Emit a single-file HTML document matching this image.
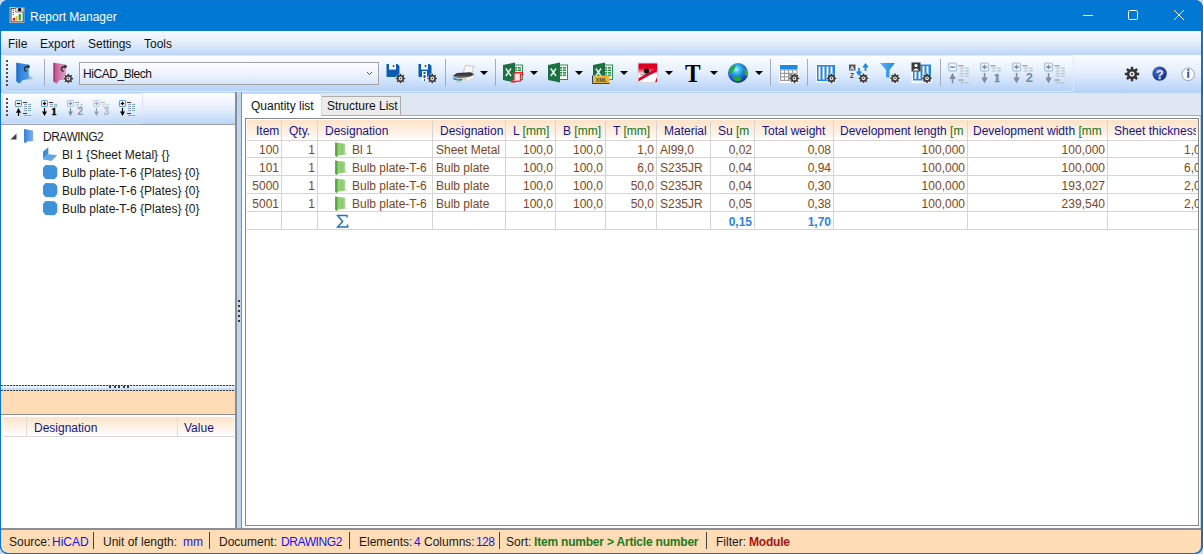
<!DOCTYPE html>
<html><head><meta charset="utf-8">
<style>
*{box-sizing:border-box;margin:0;padding:0}
html,body{width:1203px;height:554px;overflow:hidden;background:#c8d8e8;font-family:"Liberation Sans",sans-serif;font-size:12px;line-height:14px}
.a{position:absolute}
#win{position:absolute;left:0;top:0;width:1203px;height:554px;background:#0078d4;border-radius:8px;overflow:hidden}
#title{left:0;top:0;width:1203px;height:31px;color:#fff}
#menu{left:1px;top:31px;width:1200px;height:24px;background:linear-gradient(#f7faff,#e4eefb 50%,#bcd6f8)}
#menu span{position:absolute;top:6px;color:#111}
#tb{left:1px;top:55px;width:1200px;height:37px;background:linear-gradient(#fafcff,#e2edfc 50%,#b4d2f8)}
#tbseg{left:2px;top:0;width:1071px;height:37px;border:1px solid #e6e6f8;border-radius:4px;background:linear-gradient(#fdfeff,#e5effd 45%,#b6d3f8)}
#main{left:1px;top:92px;width:1200px;height:436px;background:#dfe7f2}
#status{left:1px;top:528px;width:1200px;height:25px;background:#fddcb6;border-top:2px solid #8a8e96;border-radius:0 0 7px 7px}
#status span{position:absolute;top:5px;color:#1a1a1a;white-space:nowrap}
.sep{position:absolute;width:1px;background:#9fa9b6}
.ssep{position:absolute;top:2px;width:1px;height:17px;background:#444}
.dd{position:absolute;top:16px;width:0;height:0;border-left:4px solid transparent;border-right:4px solid transparent;border-top:4px solid #000}
.ic{position:absolute}
.tree span{position:absolute;color:#1a1a1a;white-space:nowrap}
.hdr{position:absolute;top:0;height:20px;background:linear-gradient(#fde3c9,#fff);border-bottom:1px solid #d8d8d8}
.cell{position:absolute;height:18px;white-space:nowrap;overflow:hidden;color:#7c4622}
.h{position:absolute;white-space:nowrap;overflow:hidden;color:#14148c;top:3px}
.g{color:#15721a}
.vl{position:absolute;width:1px;background:#dcdcdc}
.hl{position:absolute;height:1px;background:#dcdcdc}
</style></head><body>
<div id="win">
 <div id="title" class="a">
  <div class="a" style="left:30px;top:10px">Report Manager</div>
 </div>
 <div id="menu" class="a">
  <span style="left:7px">File</span>
  <span style="left:39px">Export</span>
  <span style="left:87px">Settings</span>
  <span style="left:143px">Tools</span>
 </div>
 <div id="tb" class="a">
  <div id="tbseg" class="a"></div>
 </div>
 <div id="main" class="a">
  <!-- left panel -->
  <div class="a" style="left:0;top:0;width:1200px;height:1px;background:#b6d1f7"></div>
  <div class="a" style="left:0;top:1px;width:235px;height:31px;background:linear-gradient(#fdfeff,#e6effc 50%,#bcd6f8)"></div>
  <div class="a" style="left:1px;top:1px;width:141px;height:31px;border:1px solid #dfe0f2;border-radius:4px;background:linear-gradient(#fdfeff,#e8f0fc 50%,#bed8f8)"></div>
  <div class="a tree" style="left:0;top:32px;width:236px;height:262px;background:#fff;border-top:1px solid #a0a0a0;border-right:1px solid #8c8c8c">
   <span style="left:42px;top:5px;letter-spacing:-0.5px">DRAWING2</span>
   <span style="left:61px;top:23px">Bl 1 {Sheet Metal} {}</span>
   <span style="left:61px;top:41px">Bulb plate-T-6 {Plates} {0}</span>
   <span style="left:61px;top:59px">Bulb plate-T-6 {Plates} {0}</span>
   <span style="left:61px;top:77px">Bulb plate-T-6 {Plates} {0}</span>
  </div>
  <!-- h splitter -->
  <div class="a" style="left:0;top:293px;width:236px;height:1px;background:repeating-linear-gradient(90deg,#444 0 2px,#c8c8c8 2px 3px)"></div>
  <div class="a" style="left:0;top:294px;width:236px;height:4px;background:linear-gradient(#f2f8ff,#b8d6f8)"></div>
  <div class="a" style="left:0;top:298px;width:236px;height:1px;background:repeating-linear-gradient(90deg,#444 0 2px,#c8c8c8 2px 3px)"></div>
  <div class="a" style="left:108px;top:294px;width:22px;height:2px;background:repeating-linear-gradient(90deg,#3a3a3a 0 2px,transparent 2px 4.5px)"></div>
  <div class="a" style="left:0;top:299px;width:236px;height:24px;background:#fddcb6;border-bottom:1px solid #8c8c8c"></div>
  <div class="a" style="left:0;top:323px;width:236px;height:113px;background:#fff;border-right:1px solid #8c8c8c">
   <div class="hdr" style="left:2px;top:2px;width:231px;height:20px"></div>
   <div class="vl" style="left:25px;top:3px;height:19px"></div>
   <div class="vl" style="left:176px;top:3px;height:19px"></div>
   <div class="h" style="left:33px;top:6px">Designation</div>
   <div class="h" style="left:183px;top:6px">Value</div>
  </div>
  <!-- v splitter -->
  <div class="a" style="left:234px;top:0;width:2px;height:436px;background:#8c8c8c"></div>
  <div class="a" style="left:236px;top:0;width:5px;height:436px;background:#bcd6f8;border-right:1px solid #8c8c8c"></div>
  <!-- right: tabs -->
  <div class="a" style="left:241px;top:23px;width:959px;height:413px;background:#fff;border-top:1px solid #a9a9a9;border-right:1px solid #cfcfcf"></div>
  <div class="a" style="left:241px;top:1px;width:80px;height:24px;background:#fff;border-top:1px solid #d9d9d9;border-right:1px solid #d9d9d9"></div>
  <div class="a" style="left:250px;top:7px;color:#111">Quantity list</div>
  <div class="a" style="left:321px;top:4px;width:79px;height:20px;background:#ececec;border:1px solid #acacac;border-left:none"></div>
  <div class="a" style="left:326px;top:7px;color:#111">Structure List</div>
  <!-- grid frame -->
  <div class="a" id="grid" style="left:244px;top:26px;width:954px;height:408px;background:#fff;border:1px solid #828790;overflow:hidden">
  </div>
 </div>
 <div class="a" style="left:247px;top:120px;width:951px;height:20px;background:linear-gradient(#fde2c6,#fef6ee 80%,#fff)"></div>
<div class="a" style="left:247px;top:140px;width:951px;height:1px;background:#d5d5d5"></div>
<div class="a" style="left:247px;top:157px;width:951px;height:1px;background:#d5d5d5"></div>
<div class="a" style="left:247px;top:175px;width:951px;height:1px;background:#d5d5d5"></div>
<div class="a" style="left:247px;top:193px;width:951px;height:1px;background:#d5d5d5"></div>
<div class="a" style="left:247px;top:211px;width:951px;height:1px;background:#d5d5d5"></div>
<div class="a" style="left:247px;top:229px;width:951px;height:1px;background:#d5d5d5"></div>
<div class="a" style="left:281px;top:121px;width:1px;height:109px;background:#d5d5d5"></div>
<div class="a" style="left:317px;top:121px;width:1px;height:109px;background:#d5d5d5"></div>
<div class="a" style="left:432px;top:121px;width:1px;height:109px;background:#d5d5d5"></div>
<div class="a" style="left:505px;top:121px;width:1px;height:109px;background:#d5d5d5"></div>
<div class="a" style="left:555px;top:121px;width:1px;height:109px;background:#d5d5d5"></div>
<div class="a" style="left:605px;top:121px;width:1px;height:109px;background:#d5d5d5"></div>
<div class="a" style="left:656px;top:121px;width:1px;height:109px;background:#d5d5d5"></div>
<div class="a" style="left:710px;top:121px;width:1px;height:109px;background:#d5d5d5"></div>
<div class="a" style="left:754px;top:121px;width:1px;height:109px;background:#d5d5d5"></div>
<div class="a" style="left:833px;top:121px;width:1px;height:109px;background:#d5d5d5"></div>
<div class="a" style="left:967px;top:121px;width:1px;height:109px;background:#d5d5d5"></div>
<div class="a" style="left:1107px;top:121px;width:1px;height:109px;background:#d5d5d5"></div>
<div class="h" style="left:256px;top:124px;width:23px">Item</div>
<div class="h" style="left:289px;top:124px;width:26px">Qty.</div>
<div class="h" style="left:325px;top:124px;width:105px">Designation</div>
<div class="h" style="left:440px;top:124px;width:63px">Designation</div>
<div class="h" style="left:513px;top:124px;width:40px">L <span class=g>[mm]</span></div>
<div class="h" style="left:563px;top:124px;width:40px">B <span class=g>[mm]</span></div>
<div class="h" style="left:613px;top:124px;width:41px">T <span class=g>[mm]</span></div>
<div class="h" style="left:664px;top:124px;width:44px">Material</div>
<div class="h" style="left:718px;top:124px;width:34px">Su <span class=g>[m</span></div>
<div class="h" style="left:762px;top:124px;width:69px">Total weight</div>
<div class="h" style="left:840px;top:124px;width:125px">Development length <span class=g>[m</span></div>
<div class="h" style="left:973px;top:124px;width:132px">Development width <span class=g>[mm</span></div>
<div class="h" style="left:1114px;top:124px;width:82px">Sheet thickness</div>
<div class="cell" style="left:248px;top:143px;width:31px;text-align:right">100</div>
<div class="cell" style="left:282px;top:143px;width:33px;text-align:right">1</div>
<div class="cell" style="left:352px;top:143px;width:79px">Bl 1</div>
<div class="cell" style="left:436px;top:143px;width:68px">Sheet Metal</div>
<div class="cell" style="left:506px;top:143px;width:47px;text-align:right">100,0</div>
<div class="cell" style="left:556px;top:143px;width:47px;text-align:right">100,0</div>
<div class="cell" style="left:606px;top:143px;width:48px;text-align:right">1,0</div>
<div class="cell" style="left:660px;top:143px;width:49px">Al99,0</div>
<div class="cell" style="left:711px;top:143px;width:41px;text-align:right">0,02</div>
<div class="cell" style="left:755px;top:143px;width:76px;text-align:right">0,08</div>
<div class="cell" style="left:834px;top:143px;width:131px;text-align:right">100,000</div>
<div class="cell" style="left:968px;top:143px;width:137px;text-align:right">100,000</div>
<div class="a" style="left:1108px;top:143px;width:90px;height:18px;overflow:hidden"><div class="cell" style="left:0;top:0;width:106px;text-align:right">1,000</div></div>
<div class="cell" style="left:248px;top:161px;width:31px;text-align:right">101</div>
<div class="cell" style="left:282px;top:161px;width:33px;text-align:right">1</div>
<div class="cell" style="left:352px;top:161px;width:79px">Bulb plate-T-6</div>
<div class="cell" style="left:436px;top:161px;width:68px">Bulb plate</div>
<div class="cell" style="left:506px;top:161px;width:47px;text-align:right">100,0</div>
<div class="cell" style="left:556px;top:161px;width:47px;text-align:right">100,0</div>
<div class="cell" style="left:606px;top:161px;width:48px;text-align:right">6,0</div>
<div class="cell" style="left:660px;top:161px;width:49px">S235JR</div>
<div class="cell" style="left:711px;top:161px;width:41px;text-align:right">0,04</div>
<div class="cell" style="left:755px;top:161px;width:76px;text-align:right">0,94</div>
<div class="cell" style="left:834px;top:161px;width:131px;text-align:right">100,000</div>
<div class="cell" style="left:968px;top:161px;width:137px;text-align:right">100,000</div>
<div class="a" style="left:1108px;top:161px;width:90px;height:18px;overflow:hidden"><div class="cell" style="left:0;top:0;width:106px;text-align:right">6,000</div></div>
<div class="cell" style="left:248px;top:179px;width:31px;text-align:right">5000</div>
<div class="cell" style="left:282px;top:179px;width:33px;text-align:right">1</div>
<div class="cell" style="left:352px;top:179px;width:79px">Bulb plate-T-6</div>
<div class="cell" style="left:436px;top:179px;width:68px">Bulb plate</div>
<div class="cell" style="left:506px;top:179px;width:47px;text-align:right">100,0</div>
<div class="cell" style="left:556px;top:179px;width:47px;text-align:right">100,0</div>
<div class="cell" style="left:606px;top:179px;width:48px;text-align:right">50,0</div>
<div class="cell" style="left:660px;top:179px;width:49px">S235JR</div>
<div class="cell" style="left:711px;top:179px;width:41px;text-align:right">0,04</div>
<div class="cell" style="left:755px;top:179px;width:76px;text-align:right">0,30</div>
<div class="cell" style="left:834px;top:179px;width:131px;text-align:right">100,000</div>
<div class="cell" style="left:968px;top:179px;width:137px;text-align:right">193,027</div>
<div class="a" style="left:1108px;top:179px;width:90px;height:18px;overflow:hidden"><div class="cell" style="left:0;top:0;width:106px;text-align:right">2,000</div></div>
<div class="cell" style="left:248px;top:197px;width:31px;text-align:right">5001</div>
<div class="cell" style="left:282px;top:197px;width:33px;text-align:right">1</div>
<div class="cell" style="left:352px;top:197px;width:79px">Bulb plate-T-6</div>
<div class="cell" style="left:436px;top:197px;width:68px">Bulb plate</div>
<div class="cell" style="left:506px;top:197px;width:47px;text-align:right">100,0</div>
<div class="cell" style="left:556px;top:197px;width:47px;text-align:right">100,0</div>
<div class="cell" style="left:606px;top:197px;width:48px;text-align:right">50,0</div>
<div class="cell" style="left:660px;top:197px;width:49px">S235JR</div>
<div class="cell" style="left:711px;top:197px;width:41px;text-align:right">0,05</div>
<div class="cell" style="left:755px;top:197px;width:76px;text-align:right">0,38</div>
<div class="cell" style="left:834px;top:197px;width:131px;text-align:right">100,000</div>
<div class="cell" style="left:968px;top:197px;width:137px;text-align:right">239,540</div>
<div class="a" style="left:1108px;top:197px;width:90px;height:18px;overflow:hidden"><div class="cell" style="left:0;top:0;width:106px;text-align:right">2,000</div></div>
<div class="cell" style="left:711px;top:215px;width:41px;text-align:right;color:#2b83e6;font-weight:bold">0,15</div>
<div class="cell" style="left:755px;top:215px;width:76px;text-align:right;color:#2b83e6;font-weight:bold">1,70</div>
 <div class="a" style="left:79px;top:62px;width:300px;height:23px;border:1px solid #a3a3a3;background:linear-gradient(rgba(255,255,255,.55),rgba(255,255,255,.25))"></div>
<div class="a" style="left:83px;top:67px;color:#111;letter-spacing:-0.45px">HiCAD_Blech</div>
<div class="a" style="left:684.5px;top:61px;font-family:'Liberation Serif',serif;font-weight:bold;font-size:26px;line-height:26px;color:#000;transform:scaleX(.9);transform-origin:0 0">T</div>
<svg class="a" style="left:0;top:0" width="1203" height="554" viewBox="0 0 1203 554">
<rect x="9.7" y="7" width="14.6" height="16" fill="#f2f2f2"/>
<rect x="11" y="8.3" width="12.2" height="13.6" fill="#fff" stroke="#383838" stroke-width="1"/>
<rect x="15.2" y="7" width="9.2" height="5.6" fill="#8e8e8e"/>
<rect x="16" y="8" width="2" height="3.5" fill="#d8d8d8"/><rect x="21.2" y="8" width="2.3" height="3.5" fill="#d0d0d0"/>
<circle cx="19.6" cy="9.7" r="1.6" fill="#111"/>
<circle cx="13.3" cy="10.2" r=".6" fill="#333"/><circle cx="13.3" cy="12.4" r=".6" fill="#333"/><circle cx="13.3" cy="14.5" r=".6" fill="#333"/>
<rect x="12.8" y="17.8" width="2.2" height="2.8" fill="#e01020"/>
<rect x="15.7" y="16" width="1.9" height="4.6" fill="#e8c020"/>
<rect x="18.7" y="14" width="2.1" height="6.3" fill="#1ea028"/>
<rect x="1083" y="15" width="10" height="1" fill="#fff"/>
<rect x="1128.5" y="10.5" width="9" height="9" rx="1.2" fill="none" stroke="#fff" stroke-width="1"/>
<path d="M1174 10 L1184 20 M1184 10 L1174 20" stroke="#fff" stroke-width="1"/>

<rect x="6" y="60" width="2" height="2" fill="#505050"/>
<rect x="6" y="64" width="2" height="2" fill="#505050"/>
<rect x="6" y="68" width="2" height="2" fill="#505050"/>
<rect x="6" y="72" width="2" height="2" fill="#505050"/>
<rect x="6" y="76" width="2" height="2" fill="#505050"/>
<rect x="6" y="80" width="2" height="2" fill="#505050"/>
<rect x="6" y="84" width="2" height="2" fill="#505050"/>

<defs>
<linearGradient id="bf" x1="0" x2="1"><stop offset="0" stop-color="#2674d4"/><stop offset=".5" stop-color="#3a8ce0"/><stop offset="1" stop-color="#4c98e4"/></linearGradient>
<linearGradient id="pf" x1="0" x2="1"><stop offset="0" stop-color="#b84a82"/><stop offset=".5" stop-color="#cf7aaa"/><stop offset="1" stop-color="#dc9cc0"/></linearGradient>
</defs>
<path d="M16.5 62.8 L28.8 64.5 L28.8 79 L22.5 80.3 L19.8 83.6 L17.2 82.2 L16.5 81 Z" fill="url(#bf)"/>
<path d="M28.8 75.5 L33.5 78.5 L28.8 80 Z" fill="#8fa6bf" opacity=".75"/>
<path d="M16.5 62.8 L17.9 63 L17.9 82.5 L16.5 81 Z" fill="#2068c8"/>
<path d="M28 66.4 Q24.2 66.2 24.4 69.4 Q24.8 71.3 26.6 71.2" fill="none" stroke="#2a2a2a" stroke-width="1.5"/>
<circle cx="28.3" cy="66.6" r="1.6" fill="#333"/>

<rect x="44" y="59" width="1" height="27" fill="#a3acb8"/>

<path d="M53.5 62.8 L65.8 64.5 L65.8 79 L59.5 80.3 L56.8 83.6 L54.2 82.2 L53.5 81 Z" fill="url(#pf)"/>
<path d="M53.5 62.8 L54.9 63 L54.9 82.5 L53.5 81 Z" fill="#a83a70"/>
<path d="M65 66.4 Q61.2 66.2 61.4 69.4 Q61.8 71.3 63.6 71.2" fill="none" stroke="#2a2a2a" stroke-width="1.5"/>
<circle cx="65.3" cy="66.6" r="1.6" fill="#333"/>

<circle cx="68.4" cy="78.6" r="5.3" fill="#ffffff" opacity="0.35"/><path d="M71.80 77.76 L73.13 77.81 L73.13 79.39 L71.80 79.44 L71.40 80.41 L72.31 81.39 L71.19 82.51 L70.21 81.60 L69.24 82.00 L69.19 83.33 L67.61 83.33 L67.56 82.00 L66.59 81.60 L65.61 82.51 L64.49 81.39 L65.40 80.41 L65.00 79.44 L63.67 79.39 L63.67 77.81 L65.00 77.76 L65.40 76.79 L64.49 75.81 L65.61 74.69 L66.59 75.60 L67.56 75.20 L67.61 73.87 L69.19 73.87 L69.24 75.20 L70.21 75.60 L71.19 74.69 L72.31 75.81 L71.40 76.79Z" fill="#3c3c3c"/><circle cx="68.4" cy="78.6" r="1.9" fill="#e8e8e8"/><circle cx="68.4" cy="78.6" r="0.8" fill="#3c3c3c"/>
<path d="M367 72 L369.5 74.5 L372 72" fill="none" stroke="#555" stroke-width="1"/>

<path d="M386.5 64 L397.5 64 L399.5 66 L399.5 76 Q399.5 77 398.5 77 L387.5 77 Q386.5 77 386.5 76 Z" fill="#0a5cae"/>
<rect x="389" y="64" width="7" height="5.6" fill="#f4f6fa"/>
<rect x="392.8" y="65" width="1.5" height="2" fill="#0a5cae"/>

<circle cx="400.5" cy="78.5" r="5.3" fill="#ffffff" opacity="0.35"/><path d="M403.99 77.63 L405.23 77.71 L405.23 79.29 L403.99 79.37 L403.58 80.36 L404.41 81.29 L403.29 82.41 L402.36 81.58 L401.37 81.99 L401.29 83.23 L399.71 83.23 L399.63 81.99 L398.64 81.58 L397.71 82.41 L396.59 81.29 L397.42 80.36 L397.01 79.37 L395.77 79.29 L395.77 77.71 L397.01 77.63 L397.42 76.64 L396.59 75.71 L397.71 74.59 L398.64 75.42 L399.63 75.01 L399.71 73.77 L401.29 73.77 L401.37 75.01 L402.36 75.42 L403.29 74.59 L404.41 75.71 L403.58 76.64Z" fill="#3c3c3c"/><circle cx="400.5" cy="78.5" r="1.9" fill="#e8e8e8"/><circle cx="400.5" cy="78.5" r="0.8" fill="#3c3c3c"/>

<path d="M418.5 64 L429.5 64 L431.5 66 L431.5 76 Q431.5 77 430.5 77 L419.5 77 Q418.5 77 418.5 76 Z" fill="#0a5cae"/>
<rect x="421" y="64" width="7" height="5.6" fill="#f4f6fa"/>
<rect x="424.8" y="65" width="1.5" height="2" fill="#0a5cae"/>
<rect x="422" y="71" width="5" height="10" fill="#f4f6fa"/>
<rect x="423.5" y="72" width="2" height="2" fill="#0a5cae"/><rect x="423.5" y="75" width="2" height="3" fill="#0a5cae"/><rect x="424" y="79" width="1" height="2" fill="#0a5cae"/>

<circle cx="432.3" cy="78.5" r="5.3" fill="#ffffff" opacity="0.35"/><path d="M435.79 77.63 L437.03 77.71 L437.03 79.29 L435.79 79.37 L435.38 80.36 L436.21 81.29 L435.09 82.41 L434.16 81.58 L433.17 81.99 L433.09 83.23 L431.51 83.23 L431.43 81.99 L430.44 81.58 L429.51 82.41 L428.39 81.29 L429.22 80.36 L428.81 79.37 L427.57 79.29 L427.57 77.71 L428.81 77.63 L429.22 76.64 L428.39 75.71 L429.51 74.59 L430.44 75.42 L431.43 75.01 L431.51 73.77 L433.09 73.77 L433.17 75.01 L434.16 75.42 L435.09 74.59 L436.21 75.71 L435.38 76.64Z" fill="#3c3c3c"/><circle cx="432.3" cy="78.5" r="1.9" fill="#e8e8e8"/><circle cx="432.3" cy="78.5" r="0.8" fill="#3c3c3c"/>
<rect x="445" y="59" width="1" height="27" fill="#a3acb8"/>

<defs><linearGradient id="prb" x1="0" y1="0" x2="0" y2="1"><stop offset="0" stop-color="#2a2a2a"/><stop offset=".6" stop-color="#4a4a4a"/><stop offset="1" stop-color="#9a9a9a"/></linearGradient>
<linearGradient id="prf" x1="0" y1="0" x2="0" y2="1"><stop offset="0" stop-color="#bcbcbc"/><stop offset="1" stop-color="#e4e4e4"/></linearGradient></defs>
<path d="M463 73.5 L465.5 65.5 L473.8 66.2 L472 73.8 Z" fill="#f6f6f6" stroke="#a8a8a8" stroke-width=".6"/>
<path d="M452.5 76 L457 73 L470.5 72.3 L474.2 74.3 L470 77.5 L458 78.2 Z" fill="url(#prb)"/>
<path d="M452.5 76 L458 78.2 L470 77.5 L474.2 74.3 L474 78.5 L469 80.5 L459 81.8 L452.5 80 Z" fill="url(#prf)"/>
<path d="M466 78 L473.8 75.2 L473.6 78.3 L467 80.6 Z" fill="#f4f4f4"/>
<path d="M453.5 77.6 L457 78.8 L457 80.6 L453.5 79.6 Z" fill="#2a7ad8"/>
<path d="M457 78.8 L459 79 L459 80.8 L457 80.6 Z" fill="#3ab858"/>
<path d="M459 79 L462 78.8 L462 80.6 L459 80.8 Z" fill="#2a6ad0"/>
<path d="M456 81.5 L462 82 L462 82.6 L456 82.2 Z" fill="#a0a0a0" opacity=".7"/>

<path d="M480 71 L488 71 L484.0 75 Z" fill="#000"/>
<rect x="495" y="59" width="1" height="27" fill="#a3acb8"/>

<rect x="512" y="65.0" width="10.5" height="14.5" fill="#f4faf4" stroke="#2f8f4f" stroke-width="1"/>
<rect x="514" y="67.0" width="7" height="1.6" fill="#2f8f4f"/><rect x="514" y="69.5" width="7" height="1.6" fill="#2f8f4f"/><rect x="514" y="72.0" width="7" height="1.6" fill="#2f8f4f"/><rect x="514" y="74.5" width="7" height="1.6" fill="#2f8f4f"/><rect x="517.2" y="66.0" width=".8" height="12" fill="#f4faf4"/>
<path d="M503 65.0 L515 62.5 L515 82.5 L503 80.0 Z" fill="#1d7044"/>
<path d="M505.8 68.5 L511 76.0 M511 68.5 L505.8 76.0" stroke="#f0f8f0" stroke-width="1.4"/>


<path d="M514 73 L522.5 72.5 L522.5 74.3 L520.5 74.5 L520.5 81 L512 82 L512 80.2 L514 80 Z" fill="#fde8ea" stroke="#e8202e" stroke-width="1.3"/>

<path d="M530 71 L538 71 L534.0 75 Z" fill="#000"/>

<rect x="557" y="65.0" width="10.5" height="14.5" fill="#f4faf4" stroke="#2f8f4f" stroke-width="1"/>
<rect x="559" y="67.0" width="7" height="1.6" fill="#2f8f4f"/><rect x="559" y="69.5" width="7" height="1.6" fill="#2f8f4f"/><rect x="559" y="72.0" width="7" height="1.6" fill="#2f8f4f"/><rect x="559" y="74.5" width="7" height="1.6" fill="#2f8f4f"/><rect x="562.2" y="66.0" width=".8" height="12" fill="#f4faf4"/>
<path d="M548 65.0 L560 62.5 L560 82.5 L548 80.0 Z" fill="#1d7044"/>
<path d="M550.8 68.5 L556 76.0 M556 68.5 L550.8 76.0" stroke="#f0f8f0" stroke-width="1.4"/>

<path d="M575 71 L583 71 L579.0 75 Z" fill="#000"/>

<rect x="602" y="65.0" width="10.5" height="14.5" fill="#f4faf4" stroke="#2f8f4f" stroke-width="1"/>
<rect x="604" y="67.0" width="7" height="1.6" fill="#2f8f4f"/><rect x="604" y="69.5" width="7" height="1.6" fill="#2f8f4f"/><rect x="604" y="72.0" width="7" height="1.6" fill="#2f8f4f"/><rect x="604" y="74.5" width="7" height="1.6" fill="#2f8f4f"/><rect x="607.2" y="66.0" width=".8" height="12" fill="#f4faf4"/>
<path d="M593 65.0 L605 62.5 L605 82.5 L593 80.0 Z" fill="#1d7044"/>
<path d="M595.8 68.5 L601 76.0 M601 68.5 L595.8 76.0" stroke="#f0f8f0" stroke-width="1.4"/>


<rect x="592.5" y="75.5" width="17" height="8" fill="#e8b838"/><path d="M592.5 75.5 L592.5 83.5 L609.5 83.5" fill="none" stroke="#22406a" stroke-width="1"/>
<text x="595.5" y="81.8" font-family="Liberation Sans" font-weight="bold" font-size="5.5" fill="#4a4a3a">XML</text>

<path d="M620 71 L628 71 L624.0 75 Z" fill="#000"/>

<defs><linearGradient id="rs" x1="0" y1="0" x2="0" y2="1"><stop offset="0" stop-color="#e00024"/><stop offset=".25" stop-color="#e00024"/><stop offset=".6" stop-color="#ffffff"/><stop offset="1" stop-color="#ffffff"/></linearGradient></defs>
<rect x="637.5" y="62.5" width="20.5" height="20.5" fill="#d8d8d8"/>
<rect x="638.5" y="63.5" width="18.5" height="18.5" fill="url(#rs)"/>
<path d="M638.5 78.3 Q648 72.5 657 68 L657 71.2 Q648 75.8 638.5 81.5 Z" fill="#e00024"/>
<path d="M655 82 L657 77 L657 82 Z" fill="#e00024"/>
<circle cx="646.5" cy="71" r="2.6" fill="#111"/>
<path d="M640 75 L652 73" stroke="#444" stroke-width=".6"/>

<path d="M665 71 L673 71 L669.0 75 Z" fill="#000"/>
<path d="M710 71 L718 71 L714.0 75 Z" fill="#000"/>

<defs><radialGradient id="gl" cx=".42" cy=".32" r=".72"><stop offset="0" stop-color="#b0f4ff"/><stop offset=".3" stop-color="#30b0e8"/><stop offset=".7" stop-color="#1c54c4"/><stop offset="1" stop-color="#0c2a98"/></radialGradient></defs>
<circle cx="738" cy="73" r="10" fill="url(#gl)"/>
<path d="M730 70 Q732 65 736 65 L735 68 Q733 72 730 74 Z" fill="#20b030"/>
<path d="M733 77 Q738 75 742 79 Q740 82 736 81 Q733 80 733 77 Z" fill="#20a830"/>
<path d="M745 68 Q748 70 747.5 75 L745 76 Q744 72 745 68 Z" fill="#30b830"/>

<path d="M755 71 L763 71 L759.0 75 Z" fill="#000"/>
<rect x="770" y="59" width="1" height="27" fill="#a3acb8"/>

<rect x="779" y="63" width="20" height="20" fill="#fff" opacity=".9"/>
<rect x="780" y="65" width="17.5" height="4.5" fill="#1e88e5"/>
<rect x="780" y="69.5" width="17.5" height="11.5" fill="#9a9a9a"/>
<rect x="781" y="70.5" width="3" height="2.3" fill="#fff"/><rect x="785" y="70.5" width="3" height="2.3" fill="#fff"/><rect x="789" y="70.5" width="3" height="2.3" fill="#fff"/><rect x="793" y="70.5" width="3.5" height="2.3" fill="#fff"/>
<rect x="781" y="74" width="3" height="2.3" fill="#fff"/><rect x="785" y="74" width="3" height="2.3" fill="#fff"/>
<rect x="781" y="77.5" width="3" height="2.3" fill="#fff"/><rect x="785" y="77.5" width="3" height="2.3" fill="#fff"/>

<circle cx="794.5" cy="78.4" r="5.3" fill="#ffffff" opacity="0.35"/><path d="M797.99 77.53 L799.23 77.61 L799.23 79.19 L797.99 79.27 L797.58 80.26 L798.41 81.19 L797.29 82.31 L796.36 81.48 L795.37 81.89 L795.29 83.13 L793.71 83.13 L793.63 81.89 L792.64 81.48 L791.71 82.31 L790.59 81.19 L791.42 80.26 L791.01 79.27 L789.77 79.19 L789.77 77.61 L791.01 77.53 L791.42 76.54 L790.59 75.61 L791.71 74.49 L792.64 75.32 L793.63 74.91 L793.71 73.67 L795.29 73.67 L795.37 74.91 L796.36 75.32 L797.29 74.49 L798.41 75.61 L797.58 76.54Z" fill="#3c3c3c"/><circle cx="794.5" cy="78.4" r="1.9" fill="#e8e8e8"/><circle cx="794.5" cy="78.4" r="0.8" fill="#3c3c3c"/>
<rect x="807" y="59" width="1" height="27" fill="#a3acb8"/>

<rect x="816" y="63.5" width="20" height="19" fill="#fff" opacity=".9"/>
<rect x="817" y="65" width="18" height="16" fill="#1e88e5"/>
<rect x="818.5" y="66.5" width="2" height="13" fill="#fdf3ee"/><rect x="822.5" y="66.5" width="2" height="13" fill="#fdf3ee"/><rect x="826.5" y="66.5" width="2" height="13" fill="#fdf3ee"/><rect x="830.5" y="66.5" width="2" height="8" fill="#fdf3ee"/>

<circle cx="831.5" cy="78.4" r="5.3" fill="#ffffff" opacity="0.35"/><path d="M834.99 77.53 L836.23 77.61 L836.23 79.19 L834.99 79.27 L834.58 80.26 L835.41 81.19 L834.29 82.31 L833.36 81.48 L832.37 81.89 L832.29 83.13 L830.71 83.13 L830.63 81.89 L829.64 81.48 L828.71 82.31 L827.59 81.19 L828.42 80.26 L828.01 79.27 L826.77 79.19 L826.77 77.61 L828.01 77.53 L828.42 76.54 L827.59 75.61 L828.71 74.49 L829.64 75.32 L830.63 74.91 L830.71 73.67 L832.29 73.67 L832.37 74.91 L833.36 75.32 L834.29 74.49 L835.41 75.61 L834.58 76.54Z" fill="#3c3c3c"/><circle cx="831.5" cy="78.4" r="1.9" fill="#e8e8e8"/><circle cx="831.5" cy="78.4" r="0.8" fill="#3c3c3c"/>

<rect x="849" y="64.5" width="6.5" height="6" fill="#555"/>
<text x="850" y="70" font-family="Liberation Sans" font-weight="bold" font-size="6" fill="#fff">A</text>
<text x="850" y="77.5" font-family="Liberation Sans" font-weight="bold" font-size="6.5" fill="#444">Z</text>
<path d="M859 68 L859 73 M856.8 71.5 L859 74.5 L861.2 71.5" fill="none" stroke="#1e88e5" stroke-width="1.8"/>
<path d="M865.5 71 L865.5 66 M863.3 67.5 L865.5 64.5 L867.7 67.5" fill="none" stroke="#1e88e5" stroke-width="1.8"/>

<circle cx="863.5" cy="78.3" r="5.3" fill="#ffffff" opacity="0.35"/><path d="M866.99 77.43 L868.23 77.51 L868.23 79.09 L866.99 79.17 L866.58 80.16 L867.41 81.09 L866.29 82.21 L865.36 81.38 L864.37 81.79 L864.29 83.03 L862.71 83.03 L862.63 81.79 L861.64 81.38 L860.71 82.21 L859.59 81.09 L860.42 80.16 L860.01 79.17 L858.77 79.09 L858.77 77.51 L860.01 77.43 L860.42 76.44 L859.59 75.51 L860.71 74.39 L861.64 75.22 L862.63 74.81 L862.71 73.57 L864.29 73.57 L864.37 74.81 L865.36 75.22 L866.29 74.39 L867.41 75.51 L866.58 76.44Z" fill="#3c3c3c"/><circle cx="863.5" cy="78.3" r="1.9" fill="#e8e8e8"/><circle cx="863.5" cy="78.3" r="0.8" fill="#3c3c3c"/>

<defs><linearGradient id="fn" x1="0" x2="1"><stop offset="0" stop-color="#5ab4f0"/><stop offset="1" stop-color="#1e88e5"/></linearGradient></defs>
<path d="M880 63 L895 63 L889.5 70 L889.5 77.5 L886 77.5 L886 70 Z" fill="url(#fn)"/>

<circle cx="895" cy="78.3" r="5.3" fill="#ffffff" opacity="0.35"/><path d="M898.49 77.43 L899.73 77.51 L899.73 79.09 L898.49 79.17 L898.08 80.16 L898.91 81.09 L897.79 82.21 L896.86 81.38 L895.87 81.79 L895.79 83.03 L894.21 83.03 L894.13 81.79 L893.14 81.38 L892.21 82.21 L891.09 81.09 L891.92 80.16 L891.51 79.17 L890.27 79.09 L890.27 77.51 L891.51 77.43 L891.92 76.44 L891.09 75.51 L892.21 74.39 L893.14 75.22 L894.13 74.81 L894.21 73.57 L895.79 73.57 L895.87 74.81 L896.86 75.22 L897.79 74.39 L898.91 75.51 L898.08 76.44Z" fill="#3c3c3c"/><circle cx="895" cy="78.3" r="1.9" fill="#e8e8e8"/><circle cx="895" cy="78.3" r="0.8" fill="#3c3c3c"/>

<rect x="911.5" y="64" width="20.5" height="19" fill="#fff" opacity=".9"/>
<rect x="913" y="64.5" width="18" height="16" fill="#1e88e5"/>
<rect x="914.5" y="66" width="2" height="13" fill="#fdf3ee"/><rect x="918.5" y="66" width="2" height="13" fill="#fdf3ee"/><rect x="922.5" y="66" width="2" height="13" fill="#fdf3ee"/><rect x="926.5" y="66" width="2" height="8" fill="#fdf3ee"/>
<rect x="911.5" y="62.5" width="9" height="9" fill="#3a3a3a"/>
<circle cx="916" cy="65.5" r="1.6" fill="#fff"/><path d="M913 70.5 Q916 66.5 919 70.5 Z" fill="#fff"/>

<circle cx="927" cy="78.3" r="5.3" fill="#ffffff" opacity="0.35"/><path d="M930.49 77.43 L931.73 77.51 L931.73 79.09 L930.49 79.17 L930.08 80.16 L930.91 81.09 L929.79 82.21 L928.86 81.38 L927.87 81.79 L927.79 83.03 L926.21 83.03 L926.13 81.79 L925.14 81.38 L924.21 82.21 L923.09 81.09 L923.92 80.16 L923.51 79.17 L922.27 79.09 L922.27 77.51 L923.51 77.43 L923.92 76.44 L923.09 75.51 L924.21 74.39 L925.14 75.22 L926.13 74.81 L926.21 73.57 L927.79 73.57 L927.87 74.81 L928.86 75.22 L929.79 74.39 L930.91 75.51 L930.08 76.44Z" fill="#3c3c3c"/><circle cx="927" cy="78.3" r="1.9" fill="#e8e8e8"/><circle cx="927" cy="78.3" r="0.8" fill="#3c3c3c"/>
<rect x="940" y="59" width="1" height="27" fill="#a3acb8"/>
<g transform="translate(948,62.5) scale(1.3)"><rect x="0.5" y="0.5" width="6" height="6" rx="1.2" fill="#f3f5f8" stroke="#a9c7ee" stroke-width="1.1"/><rect x="1.8" y="2.9" width="3.4" height="1.3" fill="#8a8f98"/><path d="M3.5 8 L6 12.7 L4.1 12.7 L4.1 16 L2.9 16 L2.9 12.7 L1 12.7 Z" fill="#7f8c9a"/><rect x="8" y="2" width="4.1" height="1" fill="#98a0a8"/><rect x="9" y="3.9000000000000004" width="1.5" height="1" fill="#c4bce0"/><rect x="10.5" y="3.9000000000000004" width="1.5" height="1" fill="#a4cbbf"/><rect x="13" y="3.9000000000000004" width="1.5" height="1" fill="#c4bce0"/><rect x="14.5" y="3.9000000000000004" width="1.5" height="1" fill="#a4cbbf"/><rect x="9" y="5.9" width="1.5" height="1" fill="#c4bce0"/><rect x="10.5" y="5.9" width="1.5" height="1" fill="#a4cbbf"/><rect x="13" y="5.9" width="1.5" height="1" fill="#c4bce0"/><rect x="14.5" y="5.9" width="1.5" height="1" fill="#a4cbbf"/><rect x="9" y="8.0" width="1.5" height="1" fill="#c4bce0"/><rect x="10.5" y="8.0" width="1.5" height="1" fill="#a4cbbf"/><rect x="13" y="8.0" width="1.5" height="1" fill="#c4bce0"/><rect x="14.5" y="8.0" width="1.5" height="1" fill="#a4cbbf"/><rect x="9" y="10.0" width="1.5" height="1" fill="#c4bce0"/><rect x="10.5" y="10.0" width="1.5" height="1" fill="#a4cbbf"/><rect x="13" y="10.0" width="1.5" height="1" fill="#c4bce0"/><rect x="14.5" y="10.0" width="1.5" height="1" fill="#a4cbbf"/><rect x="9" y="15.0" width="1.5" height="1" fill="#c4bce0"/><rect x="10.5" y="15.0" width="1.5" height="1" fill="#a4cbbf"/><rect x="13" y="15.0" width="1.5" height="1" fill="#c4bce0"/><rect x="14.5" y="15.0" width="1.5" height="1" fill="#a4cbbf"/><rect x="8" y="13" width="4.1" height="1" fill="#98a0a8"/></g>
<g transform="translate(980,62.5) scale(1.3)"><rect x="0.5" y="0.5" width="6" height="6" rx="1.2" fill="#f3f5f8" stroke="#a9c7ee" stroke-width="1.1"/><rect x="1.8" y="2.9" width="3.4" height="1.3" fill="#8a8f98"/><rect x="2.85" y="1.8" width="1.3" height="3.4" fill="#8a8f98"/><path d="M3.5 16 L6 11.5 L4.1 11.5 L4.1 8 L2.9 8 L2.9 11.5 L1 11.5 Z" fill="#7f8c9a"/><rect x="8" y="2" width="4.1" height="1" fill="#98a0a8"/><rect x="9" y="3.9000000000000004" width="1.5" height="1" fill="#c4bce0"/><rect x="10.5" y="3.9000000000000004" width="1.5" height="1" fill="#a4cbbf"/><rect x="13" y="3.9000000000000004" width="1.5" height="1" fill="#c4bce0"/><rect x="14.5" y="3.9000000000000004" width="1.5" height="1" fill="#a4cbbf"/><rect x="9" y="5.9" width="1.5" height="1" fill="#c4bce0"/><rect x="10.5" y="5.9" width="1.5" height="1" fill="#a4cbbf"/><rect x="13" y="5.9" width="1.5" height="1" fill="#c4bce0"/><rect x="14.5" y="5.9" width="1.5" height="1" fill="#a4cbbf"/><text x="10.5" y="15" font-family="Liberation Serif" font-weight="bold" font-size="10" fill="#7f8c9a" stroke="#7f8c9a" stroke-width=".5">1</text></g>
<g transform="translate(1012,62.5) scale(1.3)"><rect x="0.5" y="0.5" width="6" height="6" rx="1.2" fill="#f3f5f8" stroke="#a9c7ee" stroke-width="1.1"/><rect x="1.8" y="2.9" width="3.4" height="1.3" fill="#8a8f98"/><rect x="2.85" y="1.8" width="1.3" height="3.4" fill="#8a8f98"/><path d="M3.5 16 L6 11.5 L4.1 11.5 L4.1 8 L2.9 8 L2.9 11.5 L1 11.5 Z" fill="#7f8c9a"/><rect x="8" y="2" width="4.1" height="1" fill="#98a0a8"/><rect x="9" y="3.9000000000000004" width="1.5" height="1" fill="#c4bce0"/><rect x="10.5" y="3.9000000000000004" width="1.5" height="1" fill="#a4cbbf"/><rect x="13" y="3.9000000000000004" width="1.5" height="1" fill="#c4bce0"/><rect x="14.5" y="3.9000000000000004" width="1.5" height="1" fill="#a4cbbf"/><rect x="9" y="5.9" width="1.5" height="1" fill="#c4bce0"/><rect x="10.5" y="5.9" width="1.5" height="1" fill="#a4cbbf"/><rect x="13" y="5.9" width="1.5" height="1" fill="#c4bce0"/><rect x="14.5" y="5.9" width="1.5" height="1" fill="#a4cbbf"/><text x="10.5" y="15" font-family="Liberation Sans" font-weight="bold" font-size="10" fill="#7f8c9a">2</text></g>
<g transform="translate(1044,62.5) scale(1.3)"><rect x="0.5" y="0.5" width="6" height="6" rx="1.2" fill="#f3f5f8" stroke="#a9c7ee" stroke-width="1.1"/><rect x="1.8" y="2.9" width="3.4" height="1.3" fill="#8a8f98"/><rect x="2.85" y="1.8" width="1.3" height="3.4" fill="#8a8f98"/><path d="M3.5 16 L6 11.5 L4.1 11.5 L4.1 8 L2.9 8 L2.9 11.5 L1 11.5 Z" fill="#7f8c9a"/><rect x="8" y="2" width="4.1" height="1" fill="#98a0a8"/><rect x="9" y="3.9000000000000004" width="1.5" height="1" fill="#c4bce0"/><rect x="10.5" y="3.9000000000000004" width="1.5" height="1" fill="#a4cbbf"/><rect x="13" y="3.9000000000000004" width="1.5" height="1" fill="#c4bce0"/><rect x="14.5" y="3.9000000000000004" width="1.5" height="1" fill="#a4cbbf"/><rect x="9" y="5.9" width="1.5" height="1" fill="#c4bce0"/><rect x="10.5" y="5.9" width="1.5" height="1" fill="#a4cbbf"/><rect x="13" y="5.9" width="1.5" height="1" fill="#c4bce0"/><rect x="14.5" y="5.9" width="1.5" height="1" fill="#a4cbbf"/><rect x="9" y="8.0" width="1.5" height="1" fill="#c4bce0"/><rect x="10.5" y="8.0" width="1.5" height="1" fill="#a4cbbf"/><rect x="13" y="8.0" width="1.5" height="1" fill="#c4bce0"/><rect x="14.5" y="8.0" width="1.5" height="1" fill="#a4cbbf"/><rect x="9" y="10.0" width="1.5" height="1" fill="#c4bce0"/><rect x="10.5" y="10.0" width="1.5" height="1" fill="#a4cbbf"/><rect x="13" y="10.0" width="1.5" height="1" fill="#c4bce0"/><rect x="14.5" y="10.0" width="1.5" height="1" fill="#a4cbbf"/><rect x="9" y="15.0" width="1.5" height="1" fill="#c4bce0"/><rect x="10.5" y="15.0" width="1.5" height="1" fill="#a4cbbf"/><rect x="13" y="15.0" width="1.5" height="1" fill="#c4bce0"/><rect x="14.5" y="15.0" width="1.5" height="1" fill="#a4cbbf"/><rect x="8" y="13" width="4.1" height="1" fill="#98a0a8"/></g>
<path d="M1137.05 72.75 L1139.20 72.80 L1139.20 75.20 L1137.05 75.25 L1136.45 76.68 L1137.94 78.24 L1136.24 79.94 L1134.68 78.45 L1133.25 79.05 L1133.20 81.20 L1130.80 81.20 L1130.75 79.05 L1129.32 78.45 L1127.76 79.94 L1126.06 78.24 L1127.55 76.68 L1126.95 75.25 L1124.80 75.20 L1124.80 72.80 L1126.95 72.75 L1127.55 71.32 L1126.06 69.76 L1127.76 68.06 L1129.32 69.55 L1130.75 68.95 L1130.80 66.80 L1133.20 66.80 L1133.25 68.95 L1134.68 69.55 L1136.24 68.06 L1137.94 69.76 L1136.45 71.32Z" fill="#333"/><circle cx="1132" cy="74" r="2.6" fill="#e8e8e8"/><circle cx="1132" cy="74" r="1.1" fill="#333"/>

<defs><radialGradient id="hp" cx=".35" cy=".3" r=".8"><stop offset="0" stop-color="#4a70d8"/><stop offset=".7" stop-color="#1c3a9a"/><stop offset="1" stop-color="#142a80"/></radialGradient></defs>
<circle cx="1159.6" cy="73.6" r="7.2" fill="url(#hp)"/>
<text x="1155.9" y="78.6" font-family="Liberation Sans" font-weight="bold" font-size="12.5" fill="#dfe3ee" stroke="#dfe3ee" stroke-width=".3">?</text>
<circle cx="1188.2" cy="74.3" r="6.3" fill="#fbfbfb" stroke="#8ea4c8" stroke-width="1"/>
<path d="M1186.6 72 L1189.2 71.6 L1189.2 77.3 L1190 77.8 L1186.4 77.8 L1187.3 77.3 L1187.3 72.6 Z" fill="#2c54b4"/><circle cx="1188.3" cy="70" r="1.1" fill="#2c54b4"/>

<rect x="6" y="98" width="2" height="2" fill="#505050"/>
<rect x="6" y="102" width="2" height="2" fill="#505050"/>
<rect x="6" y="106" width="2" height="2" fill="#505050"/>
<rect x="6" y="110" width="2" height="2" fill="#505050"/>
<rect x="6" y="114" width="2" height="2" fill="#505050"/>
<g transform="translate(15,100)"><rect x="0.5" y="0.5" width="6" height="6" rx="1.2" fill="#ffffff" stroke="#5b9be0" stroke-width="1.1"/><rect x="1.8" y="2.9" width="3.4" height="1.3" fill="#000"/><path d="M3.5 8 L6 12.7 L4.1 12.7 L4.1 16 L2.9 16 L2.9 12.7 L1 12.7 Z" fill="#000"/><rect x="8" y="2" width="4.1" height="1" fill="#3a3a3a"/><rect x="9" y="3.9000000000000004" width="1.5" height="1" fill="#9c94c8"/><rect x="10.5" y="3.9000000000000004" width="1.5" height="1" fill="#5aa48c"/><rect x="13" y="3.9000000000000004" width="1.5" height="1" fill="#9c94c8"/><rect x="14.5" y="3.9000000000000004" width="1.5" height="1" fill="#5aa48c"/><rect x="9" y="5.9" width="1.5" height="1" fill="#9c94c8"/><rect x="10.5" y="5.9" width="1.5" height="1" fill="#5aa48c"/><rect x="13" y="5.9" width="1.5" height="1" fill="#9c94c8"/><rect x="14.5" y="5.9" width="1.5" height="1" fill="#5aa48c"/><rect x="9" y="8.0" width="1.5" height="1" fill="#9c94c8"/><rect x="10.5" y="8.0" width="1.5" height="1" fill="#5aa48c"/><rect x="13" y="8.0" width="1.5" height="1" fill="#9c94c8"/><rect x="14.5" y="8.0" width="1.5" height="1" fill="#5aa48c"/><rect x="9" y="10.0" width="1.5" height="1" fill="#9c94c8"/><rect x="10.5" y="10.0" width="1.5" height="1" fill="#5aa48c"/><rect x="13" y="10.0" width="1.5" height="1" fill="#9c94c8"/><rect x="14.5" y="10.0" width="1.5" height="1" fill="#5aa48c"/><rect x="9" y="15.0" width="1.5" height="1" fill="#9c94c8"/><rect x="10.5" y="15.0" width="1.5" height="1" fill="#5aa48c"/><rect x="13" y="15.0" width="1.5" height="1" fill="#9c94c8"/><rect x="14.5" y="15.0" width="1.5" height="1" fill="#5aa48c"/><rect x="8" y="13" width="4.1" height="1" fill="#3a3a3a"/></g>
<g transform="translate(41,100)"><rect x="0.5" y="0.5" width="6" height="6" rx="1.2" fill="#ffffff" stroke="#5b9be0" stroke-width="1.1"/><rect x="1.8" y="2.9" width="3.4" height="1.3" fill="#000"/><rect x="2.85" y="1.8" width="1.3" height="3.4" fill="#000"/><path d="M3.5 16 L6 11.5 L4.1 11.5 L4.1 8 L2.9 8 L2.9 11.5 L1 11.5 Z" fill="#000"/><rect x="8" y="2" width="4.1" height="1" fill="#3a3a3a"/><rect x="9" y="3.9000000000000004" width="1.5" height="1" fill="#9c94c8"/><rect x="10.5" y="3.9000000000000004" width="1.5" height="1" fill="#5aa48c"/><rect x="13" y="3.9000000000000004" width="1.5" height="1" fill="#9c94c8"/><rect x="14.5" y="3.9000000000000004" width="1.5" height="1" fill="#5aa48c"/><rect x="9" y="5.9" width="1.5" height="1" fill="#9c94c8"/><rect x="10.5" y="5.9" width="1.5" height="1" fill="#5aa48c"/><rect x="13" y="5.9" width="1.5" height="1" fill="#9c94c8"/><rect x="14.5" y="5.9" width="1.5" height="1" fill="#5aa48c"/><text x="10.5" y="15" font-family="Liberation Serif" font-weight="bold" font-size="10" fill="#000" stroke="#000" stroke-width=".5">1</text></g>
<g transform="translate(67,100)"><rect x="0.5" y="0.5" width="6" height="6" rx="1.2" fill="#f3f5f8" stroke="#a9c7ee" stroke-width="1.1"/><rect x="1.8" y="2.9" width="3.4" height="1.3" fill="#8a8f98"/><rect x="2.85" y="1.8" width="1.3" height="3.4" fill="#8a8f98"/><path d="M3.5 16 L6 11.5 L4.1 11.5 L4.1 8 L2.9 8 L2.9 11.5 L1 11.5 Z" fill="#7f8c9a"/><rect x="8" y="2" width="4.1" height="1" fill="#98a0a8"/><rect x="9" y="3.9000000000000004" width="1.5" height="1" fill="#c4bce0"/><rect x="10.5" y="3.9000000000000004" width="1.5" height="1" fill="#a4cbbf"/><rect x="13" y="3.9000000000000004" width="1.5" height="1" fill="#c4bce0"/><rect x="14.5" y="3.9000000000000004" width="1.5" height="1" fill="#a4cbbf"/><rect x="9" y="5.9" width="1.5" height="1" fill="#c4bce0"/><rect x="10.5" y="5.9" width="1.5" height="1" fill="#a4cbbf"/><rect x="13" y="5.9" width="1.5" height="1" fill="#c4bce0"/><rect x="14.5" y="5.9" width="1.5" height="1" fill="#a4cbbf"/><text x="10.5" y="15" font-family="Liberation Sans" font-weight="bold" font-size="10" fill="#8a96a4">2</text></g>
<g transform="translate(93,100)" opacity=".75"><rect x="0.5" y="0.5" width="6" height="6" rx="1.2" fill="#f3f5f8" stroke="#a9c7ee" stroke-width="1.1"/><rect x="1.8" y="2.9" width="3.4" height="1.3" fill="#8a8f98"/><rect x="2.85" y="1.8" width="1.3" height="3.4" fill="#8a8f98"/><path d="M3.5 16 L6 11.5 L4.1 11.5 L4.1 8 L2.9 8 L2.9 11.5 L1 11.5 Z" fill="#7f8c9a"/><rect x="8" y="2" width="4.1" height="1" fill="#98a0a8"/><rect x="9" y="3.9000000000000004" width="1.5" height="1" fill="#c4bce0"/><rect x="10.5" y="3.9000000000000004" width="1.5" height="1" fill="#a4cbbf"/><rect x="13" y="3.9000000000000004" width="1.5" height="1" fill="#c4bce0"/><rect x="14.5" y="3.9000000000000004" width="1.5" height="1" fill="#a4cbbf"/><rect x="9" y="5.9" width="1.5" height="1" fill="#c4bce0"/><rect x="10.5" y="5.9" width="1.5" height="1" fill="#a4cbbf"/><rect x="13" y="5.9" width="1.5" height="1" fill="#c4bce0"/><rect x="14.5" y="5.9" width="1.5" height="1" fill="#a4cbbf"/><text x="10.5" y="15" font-family="Liberation Sans" font-weight="bold" font-size="10" fill="#9aa4b0">3</text></g>
<g transform="translate(119,100)"><rect x="0.5" y="0.5" width="6" height="6" rx="1.2" fill="#ffffff" stroke="#5b9be0" stroke-width="1.1"/><rect x="1.8" y="2.9" width="3.4" height="1.3" fill="#000"/><rect x="2.85" y="1.8" width="1.3" height="3.4" fill="#000"/><path d="M3.5 16 L6 11.5 L4.1 11.5 L4.1 8 L2.9 8 L2.9 11.5 L1 11.5 Z" fill="#000"/><rect x="8" y="2" width="4.1" height="1" fill="#3a3a3a"/><rect x="9" y="3.9000000000000004" width="1.5" height="1" fill="#9c94c8"/><rect x="10.5" y="3.9000000000000004" width="1.5" height="1" fill="#5aa48c"/><rect x="13" y="3.9000000000000004" width="1.5" height="1" fill="#9c94c8"/><rect x="14.5" y="3.9000000000000004" width="1.5" height="1" fill="#5aa48c"/><rect x="9" y="5.9" width="1.5" height="1" fill="#9c94c8"/><rect x="10.5" y="5.9" width="1.5" height="1" fill="#5aa48c"/><rect x="13" y="5.9" width="1.5" height="1" fill="#9c94c8"/><rect x="14.5" y="5.9" width="1.5" height="1" fill="#5aa48c"/><rect x="9" y="8.0" width="1.5" height="1" fill="#9c94c8"/><rect x="10.5" y="8.0" width="1.5" height="1" fill="#5aa48c"/><rect x="13" y="8.0" width="1.5" height="1" fill="#9c94c8"/><rect x="14.5" y="8.0" width="1.5" height="1" fill="#5aa48c"/><rect x="9" y="10.0" width="1.5" height="1" fill="#9c94c8"/><rect x="10.5" y="10.0" width="1.5" height="1" fill="#5aa48c"/><rect x="13" y="10.0" width="1.5" height="1" fill="#9c94c8"/><rect x="14.5" y="10.0" width="1.5" height="1" fill="#5aa48c"/><rect x="9" y="15.0" width="1.5" height="1" fill="#9c94c8"/><rect x="10.5" y="15.0" width="1.5" height="1" fill="#5aa48c"/><rect x="13" y="15.0" width="1.5" height="1" fill="#9c94c8"/><rect x="14.5" y="15.0" width="1.5" height="1" fill="#5aa48c"/><rect x="8" y="13" width="4.1" height="1" fill="#3a3a3a"/></g>

<path d="M16.5 133.5 L16.5 139.5 L10.5 139.5 Z" fill="#404040"/>
<defs><linearGradient id="tf" x1="0" x2="1"><stop offset="0" stop-color="#3a80d8"/><stop offset="1" stop-color="#7ab0ea"/></linearGradient></defs>
<path d="M24 129 L33 130.5 L33 141 L27 141.5 L25.5 143.5 L24 142 Z" fill="url(#tf)"/>
<path d="M33 141 L36 140 L28 141.5 Z" fill="#b0c4dc"/>
<path d="M43 151.5 L48.3 147.2 L48.3 154.3 L43 158.7 Z" fill="#3a8ed8"/>
<path d="M43 158.7 L48.3 154.3 L57.3 155.2 L52 160.3 Z" fill="#5ea6e6"/>
<path d="M43 158.7 L52 160.3 L51.5 160.8 L43 159.3 Z" fill="#2a6ab0"/>

<path d="M45.5 165 L54.5 165.3 L57.3 168 L57.3 176 L54.5 179.2 L45.5 179 L43 176 L43 168 Z" fill="#3f91da"/>
<path d="M45.5 183 L54.5 183.3 L57.3 186 L57.3 194 L54.5 197.2 L45.5 197 L43 194 L43 186 Z" fill="#3f91da"/>
<path d="M45.5 201 L54.5 201.3 L57.3 204 L57.3 212 L54.5 215.2 L45.5 215 L43 212 L43 204 Z" fill="#3f91da"/>
<rect x="238" y="300" width="2" height="2" fill="#3a3a3a"/>
<rect x="238" y="305" width="2" height="2" fill="#3a3a3a"/>
<rect x="238" y="310" width="2" height="2" fill="#3a3a3a"/>
<rect x="238" y="315" width="2" height="2" fill="#3a3a3a"/>
<rect x="238" y="320" width="2" height="2" fill="#3a3a3a"/>
<defs><linearGradient id="gfo" x1="0" x2="1"><stop offset="0" stop-color="#6cb04c"/><stop offset=".15" stop-color="#5aa63e"/><stop offset=".35" stop-color="#98d27a"/><stop offset=".7" stop-color="#8ac870"/><stop offset="1" stop-color="#b0dc98"/></linearGradient></defs>
<path d="M335 142.5 L345.3 143.8 L345.3 154.5 L338.5 155.5 L336.6 157 L335 155.7 Z" fill="url(#gfo)"/>
<path d="M345.3 152 L347 154.8 L345.3 155 Z" fill="#c8d8c0"/>
<rect x="339.5" y="144" width=".8" height="11" fill="#9ad47e" opacity=".6"/>
<path d="M335 160.5 L345.3 161.8 L345.3 172.5 L338.5 173.5 L336.6 175 L335 173.7 Z" fill="url(#gfo)"/>
<path d="M345.3 170 L347 172.8 L345.3 173 Z" fill="#c8d8c0"/>
<rect x="339.5" y="162" width=".8" height="11" fill="#9ad47e" opacity=".6"/>
<path d="M335 178.5 L345.3 179.8 L345.3 190.5 L338.5 191.5 L336.6 193 L335 191.7 Z" fill="url(#gfo)"/>
<path d="M345.3 188 L347 190.8 L345.3 191 Z" fill="#c8d8c0"/>
<rect x="339.5" y="180" width=".8" height="11" fill="#9ad47e" opacity=".6"/>
<path d="M335 196.5 L345.3 197.8 L345.3 208.5 L338.5 209.5 L336.6 211 L335 209.7 Z" fill="url(#gfo)"/>
<path d="M345.3 206 L347 208.8 L345.3 209 Z" fill="#c8d8c0"/>
<rect x="339.5" y="198" width=".8" height="11" fill="#9ad47e" opacity=".6"/>
<path d="M347 217.6 L347 215.6 L337.6 215.6 L342.6 221.5 L337.6 227.1 L347.6 227.1 L347.6 224.6" fill="none" stroke="#2472b0" stroke-width="1.5"/></svg>
 <div id="status" class="a">
  <span style="left:8px">Source:</span><span style="left:51px;color:#1414f8">HiCAD</span>
  <div class="ssep" style="left:92px"></div>
  <span style="left:102px">Unit of length:</span><span style="left:182px;color:#1414f8">mm</span>
  <div class="ssep" style="left:208px"></div>
  <span style="left:218px">Document:</span><span style="left:280px;color:#1414f8;letter-spacing:-0.4px">DRAWING2</span>
  <div class="ssep" style="left:348px"></div>
  <span style="left:358px">Elements:</span><span style="left:413px;color:#1414f8">4</span><span style="left:423px">Columns:</span><span style="left:475px;color:#1414f8;letter-spacing:-0.6px">128</span>
  <div class="ssep" style="left:498px"></div>
  <span style="left:505px">Sort:</span><span style="left:533px;color:#1f7a1f;font-weight:bold;letter-spacing:-0.2px">Item number &gt; Article number</span>
  <div class="ssep" style="left:705px"></div>
  <span style="left:715px">Filter:</span><span style="left:748px;color:#a31515;font-weight:bold;letter-spacing:-0.2px">Module</span>
 </div>
</div>
<div class="a" style="left:0;top:0;width:1203px;height:554px;border:1px solid #0a74d0;border-radius:8px;pointer-events:none"></div>
</body></html>
